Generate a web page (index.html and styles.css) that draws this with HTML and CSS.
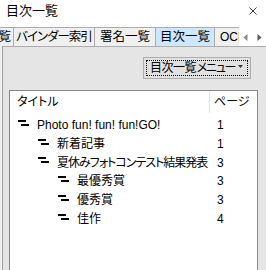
FILE: index.html
```html
<!DOCTYPE html>
<html lang="ja">
<head>
<meta charset="utf-8">
<title>目次一覧</title>
<link rel="stylesheet" href="styles.css">
</head>
<body>
<div class="window">
  <div class="titlebar">
    <span class="title">目次一覧</span>
    <svg class="close" width="8" height="8" viewBox="0 0 8 8"><path d="M0.5 0.5L7.5 7.5M7.5 0.5L0.5 7.5" stroke="#404040" stroke-width="1" fill="none"/></svg>
  </div>
  <div class="tabstrip">
    <div class="tabs">
      <div class="tab tab-first">一覧</div>
      <div class="tab tab-w81"><span class="tight">バインダー索引</span></div>
      <div class="tab tab-w61">署名一覧</div>
      <div class="tab tab-w59 active">目次一覧</div>
      <div class="tab tab-last">OCR</div>
    </div>
    <div class="scroller">
      <svg width="5" height="7" viewBox="0 0 5 7"><path d="M4.5 0L0.5 3.5L4.5 7Z" fill="#8a8a8a"/></svg>
      <svg width="5" height="7" viewBox="0 0 5 7"><path d="M0.5 0L4.5 3.5L0.5 7Z" fill="#5a5a5a"/></svg>
    </div>
  </div>
  <div class="panel">
    <button class="menu-btn" type="button"><span class="focus"><span class="btn-label">目次一覧<span class="kana">メニュー</span></span><svg class="caret" width="5" height="3" viewBox="0 0 5 3"><path d="M0 0H5L2.5 3Z" fill="#333"/></svg></span></button>
    <div class="list">
      <div class="list-head">
        <div class="head-title">タイトル</div>
        <div class="head-page">ページ</div>
      </div>
      <div class="row">
        <div class="cell-title lvl0"><svg class="node" width="11" height="6" viewBox="0 0 11 6"><rect x="0" y="0" width="8" height="2"/><rect x="3" y="4" width="8" height="2"/></svg>Photo fun! fun! fun!GO!</div>
        <div class="cell-page">1</div>
      </div>
      <div class="row">
        <div class="cell-title lvl1"><svg class="node" width="11" height="6" viewBox="0 0 11 6"><rect x="0" y="0" width="8" height="2"/><rect x="3" y="4" width="8" height="2"/></svg>新着記事</div>
        <div class="cell-page">1</div>
      </div>
      <div class="row">
        <div class="cell-title lvl1"><svg class="node" width="11" height="6" viewBox="0 0 11 6"><rect x="0" y="0" width="8" height="2"/><rect x="3" y="4" width="8" height="2"/></svg><span class="tight">夏休みフォトコンテスト結果発表</span></div>
        <div class="cell-page">3</div>
      </div>
      <div class="row">
        <div class="cell-title lvl2"><svg class="node" width="11" height="6" viewBox="0 0 11 6"><rect x="0" y="0" width="8" height="2"/><rect x="3" y="4" width="8" height="2"/></svg>最優秀賞</div>
        <div class="cell-page">3</div>
      </div>
      <div class="row">
        <div class="cell-title lvl2"><svg class="node" width="11" height="6" viewBox="0 0 11 6"><rect x="0" y="0" width="8" height="2"/><rect x="3" y="4" width="8" height="2"/></svg>優秀賞</div>
        <div class="cell-page">3</div>
      </div>
      <div class="row">
        <div class="cell-title lvl2"><svg class="node" width="11" height="6" viewBox="0 0 11 6"><rect x="0" y="0" width="8" height="2"/><rect x="3" y="4" width="8" height="2"/></svg>佳作</div>
        <div class="cell-page">4</div>
      </div>
    </div>
  </div>
</div>
</body>
</html>
```
FILE: styles.css
```css
* {
  box-sizing: border-box;
  margin: 0;
  padding: 0;
}

html, body {
  width: 266px;
  height: 270px;
  overflow: hidden;
}

body {
  font-family: "Liberation Sans", "Noto Sans CJK JP", sans-serif;
  font-feature-settings: "palt";
  color: #000;
  background: #f0f0f0;
}

.window {
  display: flex;
  flex-direction: column;
  height: 290px;
}

.titlebar {
  height: 24px;
  background: #fff;
  display: flex;
  justify-content: space-between;
  align-items: flex-start;
  padding: 2px 9px 0 6px;
}

.title {
  font-size: 13px;
  line-height: 17px;
}

.close {
  margin-top: 5px;
}

.tabstrip {
  height: 22px;
  background: #fff;
  padding-top: 3px;
  display: flex;
}

.tabs {
  width: 239px;
  display: flex;
  overflow: hidden;
}

.tab {
  flex: 0 0 auto;
  height: 19px;
  border-top: 1px solid #acacac;
  border-right: 1px solid #acacac;
  background: #f0f0f0;
  font-size: 12.5px;
  line-height: 18px;
  text-align: center;
  white-space: nowrap;
}

.tab-first {
  width: 41px;
  margin-left: -27px;
  text-align: right;
  padding-right: 2px;
}

.tab-w81 { width: 81px; }
.tab-w61 { width: 61px; }
.tab-w59 { width: 59px; }

.tab-last {
  width: 40px;
  text-align: left;
  padding-left: 5px;
  border-right: none;
  font-size: 12px;
}

.tab.active {
  background: #cce8ff;
}

.tight {
  letter-spacing: -1px;
}

.scroller {
  flex: 1;
  display: flex;
  align-items: center;
  gap: 9px;
  padding: 1px 0 0 4px;
}

.panel {
  flex: 1;
  margin-left: 2px;
  border-left: 1px solid #a0a0a0;
  border-top: 1px solid #acacac;
  background: #e5e5e5;
  padding: 10px 8px 0 6px;
  display: flex;
  flex-direction: column;
}

.menu-btn {
  align-self: flex-end;
  margin-right: 7px;
  width: 108px;
  height: 22px;
  border: 1px solid #adadad;
  background: #e1e1e1;
  padding: 2px;
  font-family: inherit;
  font-size: 12px;
  color: #000;
  display: flex;
}

.focus {
  flex: 1;
  display: flex;
  align-items: center;
  border: 1px dotted #000;
  padding: 0 4px 0 3px;
  line-height: 16px;
  white-space: nowrap;
  overflow: hidden;
}

.btn-label {
  letter-spacing: -0.5px;
}

.btn-label .kana {
  letter-spacing: -2.5px;
}

.caret {
  align-self: flex-start;
  margin-top: 4px;
  margin-left: auto;
  flex: 0 0 auto;
}

.list {
  flex: 1;
  margin-top: 11px;
  background: #fff;
  border: 1px solid #828790;
  font-size: 12px;
}

.list-head {
  display: flex;
  height: 25px;
}

.head-title {
  width: 200px;
  height: 22px;
  line-height: 22px;
  padding-left: 7px;
  border-right: 1px solid #e5e5e5;
}

.head-page {
  line-height: 22px;
  padding-left: 4px;
}

.row {
  display: flex;
  height: 18.75px;
  line-height: 18.75px;
}

.cell-title {
  width: 201px;
  display: flex;
  align-items: center;
  white-space: nowrap;
}

.lvl0 { padding-left: 8px; }
.lvl1 { padding-left: 28px; }
.lvl2 { padding-left: 48px; }

.node {
  flex: 0 0 auto;
  margin-right: 8px;
  margin-bottom: 5px;
  fill: #000;
}

.cell-page {
  padding-left: 6px;
}
```
